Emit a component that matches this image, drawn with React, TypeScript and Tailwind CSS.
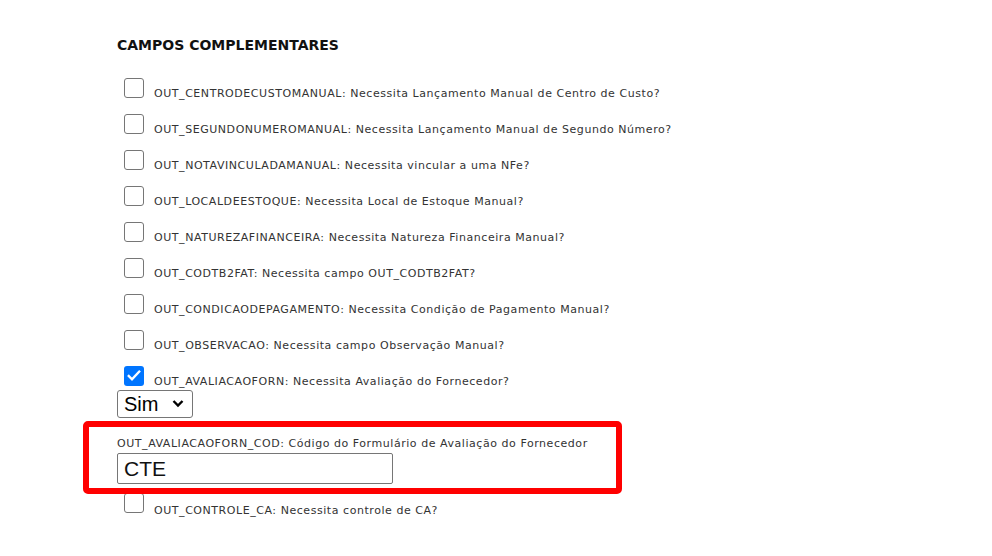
import React from 'react';

type Campo = { code: string; label: string; checked?: boolean };

const campos: Campo[] = [
  { code: 'OUT_CENTRODECUSTOMANUAL', label: 'Necessita Lançamento Manual de Centro de Custo?' },
  { code: 'OUT_SEGUNDONUMEROMANUAL', label: 'Necessita Lançamento Manual de Segundo Número?' },
  { code: 'OUT_NOTAVINCULADAMANUAL', label: 'Necessita vincular a uma NFe?' },
  { code: 'OUT_LOCALDEESTOQUE', label: 'Necessita Local de Estoque Manual?' },
  { code: 'OUT_NATUREZAFINANCEIRA', label: 'Necessita Natureza Financeira Manual?' },
  { code: 'OUT_CODTB2FAT', label: 'Necessita campo OUT_CODTB2FAT?' },
  { code: 'OUT_CONDICAODEPAGAMENTO', label: 'Necessita Condição de Pagamento Manual?' },
  { code: 'OUT_OBSERVACAO', label: 'Necessita campo Observação Manual?' },
  { code: 'OUT_AVALIACAOFORN', label: 'Necessita Avaliação do Fornecedor?', checked: true },
];

const Box: React.FC<{ checked?: boolean }> = ({ checked }) =>
  checked ? (
    <span className="flex w-5 h-5 shrink-0 items-center justify-center rounded-[3px] bg-[#0075ff]">
      <svg viewBox="0 0 20 20" className="w-4 h-4">
        <path d="M3.5 10l4 4.2 9-9.7" fill="none" stroke="#fff" strokeWidth="3" strokeLinecap="square" />
      </svg>
    </span>
  ) : (
    <span className="block w-5 h-5 shrink-0 rounded-[3px] border-[1.5px] border-[#767676] bg-white" />
  );

const Row: React.FC<{ campo: Campo }> = ({ campo }) => (
  <div className="flex items-end gap-[10px] h-9 pl-[7px]">
    <div className="mb-[10px]">
      <Box checked={campo.checked} />
    </div>
    <span className="mb-[8px] leading-[13px]">
      {campo.code}: {campo.label}
    </span>
  </div>
);

const App: React.FC = () => {
  return (
    <div className="w-[992px] h-[556px] bg-white overflow-hidden text-[11px] tracking-[0.55px] text-[#333] font-['DejaVu_Sans',sans-serif]">
      <div className="pl-[117px] pt-[37px]">
        <h2 className="text-[14px] tracking-normal font-bold text-[#111] leading-[17px] mb-[18px]">CAMPOS COMPLEMENTARES</h2>

        {campos.map((c) => (
          <Row key={c.code} campo={c} />
        ))}

        <div className="relative w-[76px] h-[28px] -mt-[6px]">
          <select
            defaultValue="Sim"
            className="appearance-none w-full h-full rounded-[3px] border border-[#767676] bg-white pl-[6px] text-[20px] tracking-normal text-black font-['Liberation_Sans',sans-serif] leading-none"
          >
            <option>Sim</option>
            <option>Não</option>
          </select>
          <svg viewBox="0 0 16 16" className="absolute right-[7px] top-[8px] w-[16px] h-[12px] pointer-events-none">
            <path d="M2 4l6 6 6-6" fill="none" stroke="#000" strokeWidth="3.2" />
          </svg>
        </div>

        <div className="relative pt-[19px]">
          <div className="leading-[13px]">
            OUT_AVALIACAOFORN_COD: Código do Formulário de Avaliação do Fornecedor
          </div>
          <input
            defaultValue="CTE"
            className="mt-[3px] w-[276px] h-[31px] rounded-[2px] border border-[#767676] px-[6px] text-[21px] tracking-normal text-[#111] font-['Liberation_Sans',sans-serif]"
          />
          <div className="absolute -left-[34px] top-[3px] w-[539px] h-[73px] rounded-[5px] border-[6px] border-[#ff0000] z-10 pointer-events-none" />
        </div>

        <div className="flex items-end gap-[10px] pl-[7px] mt-[9px]">
          <Box />
          <span className="leading-[13px] -mb-[4px]">OUT_CONTROLE_CA: Necessita controle de CA?</span>
        </div>
      </div>
    </div>
  );
};

export default App;
